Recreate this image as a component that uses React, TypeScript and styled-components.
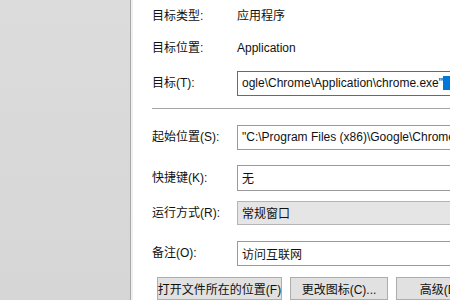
import styled, { createGlobalStyle } from "styled-components";

const GlobalStyle = createGlobalStyle`
  html, body {
    margin: 0;
    padding: 0;
    background: #ffffff;
  }
  #root {
    width: 450px;
    height: 300px;
    overflow: hidden;
  }
`;

const Screen = styled.div`
  display: flex;
  width: 450px;
  height: 300px;
  overflow: hidden;
  font-family: "Liberation Sans", "Noto Sans CJK SC", sans-serif;
  font-size: 12px;
  color: #111;
`;

const Desktop = styled.div`
  width: 130px;
  flex-shrink: 0;
  background: linear-gradient(180deg, #dcdcdc 0%, #d6d6d6 100%);
  border-right: 1px solid #a8a8a8;
`;

const Frame = styled.div`
  width: 2px;
  flex-shrink: 0;
  background: #f0f0f0;
`;

const Page = styled.div`
  flex: 1;
  min-width: 0;
  padding-left: 19px;
  display: flex;
  flex-direction: column;
  white-space: nowrap;
`;

const Row = styled.div<{ $top?: number; $h: number }>`
  display: grid;
  grid-template-columns: 85px 1fr;
  align-items: center;
  height: ${(p) => p.$h}px;
  margin-top: ${(p) => p.$top ?? 0}px;
`;

const Label = styled.span`
  line-height: 1;
`;

const Value = styled.span`
  line-height: 1;
`;

const Field = styled.div<{ $variant?: "focus" | "combo" }>`
  box-sizing: border-box;
  height: 100%;
  width: 330px;
  display: flex;
  align-items: center;
  padding-left: 4px;
  overflow: hidden;
  background: ${(p) => (p.$variant === "combo" ? "#e5e5e5" : "#ffffff")};
  border: 1px solid
    ${(p) =>
      p.$variant === "focus"
        ? "#1a7fd4"
        : p.$variant === "combo"
        ? "#b4b4b4"
        : "#9a9a9a"};
`;

const Selected = styled.span`
  background: #0078d7;
  color: #fff;
  padding-right: 12px;
`;

const Separator = styled.div`
  height: 1px;
  margin-top: 12px;
  background: #a3a3a3;
  width: 320px;
`;

const ButtonBar = styled.div`
  display: flex;
  gap: 8px;
  margin-top: 11px;
  padding-left: 5px;
`;

const Button = styled.div<{ $w: number }>`
  box-sizing: border-box;
  width: ${(p) => p.$w}px;
  flex-shrink: 0;
  height: 23px;
  display: flex;
  align-items: center;
  justify-content: center;
  background: #e1e1e1;
  border: 1px solid #adadad;
`;

export default function App() {
  return (
    <>
      <GlobalStyle />
      <Screen>
        <Desktop />
        <Frame />
        <Page>
          <Row $h={33}>
            <Label>目标类型:</Label>
            <Value>应用程序</Value>
          </Row>
          <Row $h={33}>
            <Label>目标位置:</Label>
            <Value>Application</Value>
          </Row>
          <Row $h={26} $top={7}>
            <Label>目标(T):</Label>
            <Field $variant="focus">
              ogle\Chrome\Application\chrome.exe"<Selected>&nbsp;</Selected>
            </Field>
          </Row>
          <Separator />
          <Row $h={26} $top={16}>
            <Label>起始位置(S):</Label>
            <Field>"C:\Program Files (x86)\Google\Chrome\Application"</Field>
          </Row>
          <Row $h={27} $top={15}>
            <Label>快捷键(K):</Label>
            <Field>无</Field>
          </Row>
          <Row $h={25} $top={10}>
            <Label>运行方式(R):</Label>
            <Field $variant="combo">常规窗口</Field>
          </Row>
          <Row $h={26} $top={16}>
            <Label>备注(O):</Label>
            <Field>访问互联网</Field>
          </Row>
          <ButtonBar>
            <Button $w={125}>打开文件所在的位置(F)</Button>
            <Button $w={98}>更改图标(C)...</Button>
            <Button $w={98}>高级(D)...</Button>
          </ButtonBar>
        </Page>
      </Screen>
    </>
  );
}
